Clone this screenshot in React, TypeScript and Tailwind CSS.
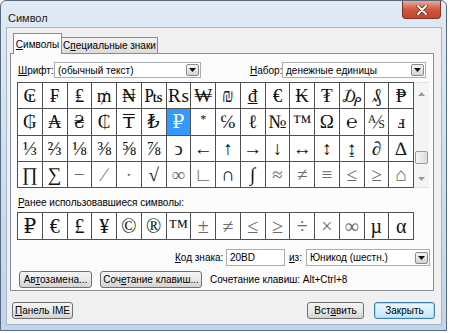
import type { ReactNode } from "react";

const rows = [
  ["₢", "₣", "₤", "₥", "₦", "₧", "₨", "₩", "₪", "₫", "€", "₭", "₮", "₯", "₰", "₱"],
  ["₲", "₳", "₴", "₵", "₸", "₺", "₽", "*", "℅", "ℓ", "№", "™", "Ω", "℮", "⅍", "ⅎ"],
  ["⅓", "⅔", "⅛", "⅜", "⅝", "⅞", "ↄ", "←", "↑", "→", "↓", "↔", "↕", "↨", "∂", "∆"],
  ["∏", "∑", "−", "∕", "∙", "√", "∞", "∟", "∩", "∫", "≈", "≠", "≡", "≤", "≥", "⌂"],
];

const greyGlyphs = ["−", "∕", "∙", "∞", "∟", "≈", "≠", "≡", "≤", "≥", "⌂", "±", "÷", "×"];

const recent = ["₽", "€", "£", "¥", "©", "®", "™", "±", "≠", "≤", "≥", "÷", "×", "∞", "µ", "α"];

function Arrow() {
  return (
    <span className="mr-px flex h-[12px] w-[13px] items-center justify-center rounded-[2px] border border-[#8a8a8a] bg-gradient-to-b from-[#f6f6f6] to-[#d4d4d4]">
      <svg width="7" height="4" viewBox="0 0 7 4">
        <path d="M0 0h7L3.5 4z" fill="#111" />
      </svg>
    </span>
  );
}

function Select({ className, text }: { className: string; text: string }) {
  return (
    <div className={`flex h-[16px] items-center border border-[#abadb3] bg-white ${className}`}>
      <span className="flex-1 truncate pl-[3px]">{text}</span>
      <Arrow />
    </div>
  );
}

function Btn({ children, className }: { children: ReactNode; className: string }) {
  return (
    <div
      className={`flex h-[17px] items-center justify-center rounded-[3px] border border-[#707070] bg-gradient-to-b from-[#f4f4f4] via-[#e9e9e9] to-[#d2d2d2] ${className}`}
    >
      {children}
    </div>
  );
}

function Cell({ ch, selected, big }: { ch: string; selected?: boolean; big?: boolean }) {
  const grey = greyGlyphs.includes(ch);
  const star = ch === "*";
  return (
    <div
      className={`flex justify-center border-r border-b border-[#505050] leading-none ${
        star ? "items-start pt-[4px] text-[12px]" : big ? "items-center text-[20px]" : "items-center text-[19px]"
      } ${selected ? "bg-[#3399ff] text-white" : grey ? "text-[#6a6a6a]" : "text-[#111]"}`}
    >
      {ch}
    </div>
  );
}

export default function App() {
  return (
    <div className="h-[333px] w-[450px] bg-white font-['Liberation_Sans',Arial,sans-serif] text-[10px] text-black">
      <div className="flex h-[331px] w-[447px] flex-col rounded-t-[6px] border border-[#5a6b7e] bg-gradient-to-b from-[#dfeaf5] via-[#cddff0] to-[#c0d5eb]">
        {/* title bar */}
        <div className="flex h-[26px] items-start">
          <span className="pt-[9px] pl-[7px] text-[11px] text-[#1a1a1a]">Символ</span>
          <div className="mr-[5px] ml-auto flex h-[18px] w-[39px] items-center justify-center rounded-b-[4px] border border-t-0 border-[#7a3428] bg-gradient-to-b from-[#e9a99b] via-[#d0583c] to-[#c9442a]">
            <svg width="12" height="10" viewBox="0 0 12 10">
              <path d="M2 1l8 8M10 1L2 9" stroke="#5b2318" strokeWidth="3.4" strokeLinecap="round" />
              <path d="M2 1l8 8M10 1L2 9" stroke="#fff" strokeWidth="2" strokeLinecap="round" />
            </svg>
          </div>
        </div>

        {/* client area */}
        <div className="ml-[5px] flex h-[298px] w-[436px] flex-col border border-[#a4b6cc] bg-[#f0f0f0]">
          {/* tabs */}
          <div className="flex h-[25px] items-end pl-[6px]">
            <div className="relative z-10 -mb-px flex h-[21px] w-[49px] items-center justify-center border border-b-0 border-[#898c95] bg-[#fcfcfc]">
              <span>
                <u>С</u>имволы
              </span>
            </div>
            <div className="flex h-[16px] w-[96px] items-center justify-center border border-b-0 border-l-0 border-[#898c95] bg-gradient-to-b from-[#f3f3f3] to-[#dcdcdc]">
              <span>
                С<u>п</u>ециальные знаки
              </span>
            </div>
          </div>

          {/* tab page */}
          <div className="ml-[3px] flex h-[238px] w-[424px] flex-col border border-[#898c95] bg-[#fbfbfb] pl-[6px]">
            <div className="mt-[8px] flex h-[16px] items-center">
              <span className="w-[37px] pl-px">
                <u>Ш</u>рифт:
              </span>
              <Select className="w-[147px]" text="(обычный текст)" />
              <span className="ml-[49px] w-[32px]">
                <u>Н</u>абор:
              </span>
              <Select className="w-[144px]" text="денежные единицы" />
            </div>

            {/* symbol grid */}
            <div className="mt-[4px] flex">
              <div className="grid h-[106px] w-[397px] grid-cols-16 grid-rows-4 border-t border-l border-[#505050] bg-white font-['Liberation_Serif','DejaVu_Serif',serif]">
                {rows.map((r, i) =>
                  r.map((ch, j) => <Cell key={`${i}-${j}`} ch={ch} selected={i === 1 && j === 6} />)
                )}
              </div>
              <div className="flex h-[106px] w-[15px] flex-col items-center border-t border-b border-[#e2e2e2] bg-[#f4f4f4]">
                <svg className="mt-[9px]" width="7" height="4" viewBox="0 0 7 4">
                  <path d="M0 4h7L3.5 0z" fill="#9a9a9a" />
                </svg>
                <div className="mt-[55px] h-[13px] w-[13px] rounded-[2px] border border-[#9a9a9a] bg-gradient-to-r from-[#f6f6f6] to-[#dcdcdc]" />
                <svg className="mt-auto mb-[6px]" width="7" height="4" viewBox="0 0 7 4">
                  <path d="M0 0h7L3.5 4z" fill="#9a9a9a" />
                </svg>
              </div>
            </div>

            <div className="mt-[10px] pl-px leading-none">
              <u>Р</u>анее использовавшиеся символы:
            </div>

            <div className="mt-[4px] grid h-[28px] w-[397px] grid-cols-16 border-t border-l border-[#505050] bg-white font-['Liberation_Serif','DejaVu_Serif',serif]">
              {recent.map((ch, i) => (
                <Cell key={i} ch={ch} big />
              ))}
            </div>

            <div className="mt-[9px] flex h-[17px] items-center">
              <span className="ml-[158px] w-[51px]">
                <u>К</u>од знака:
              </span>
              <div className="flex h-[17px] w-[59px] items-center border border-[#abadb3] bg-white pl-[3px]">20BD</div>
              <span className="ml-[4px] w-[17px]">
                <u>и</u>з:
              </span>
              <Select className="h-[17px] w-[124px]" text="Юникод (шестн.)" />
            </div>

            <div className="mt-[5px] flex h-[17px] items-center">
              <Btn className="ml-[2px] w-[73px]">
                <span>
                  Ав<u>т</u>озамена...
                </span>
              </Btn>
              <Btn className="ml-[8px] w-[102px]">
                <span>
                  Соч<u>е</u>тание клавиш...
                </span>
              </Btn>
              <span className="ml-[8px]">Сочетание клавиш: Alt+Ctrl+8</span>
            </div>
          </div>

          {/* bottom buttons */}
          <div className="mt-[11px] flex items-center pl-[5px]">
            <Btn className="w-[61px]">
              <span>
                <u>П</u>анель IME
              </span>
            </Btn>
            <Btn className="ml-auto w-[57px]">
              <span>
                Вст<u>а</u>вить
              </span>
            </Btn>
            <div className="mr-[6px] ml-[10px] flex h-[17px] w-[61px] items-center justify-center rounded-[3px] border border-[#3c7fb1] bg-gradient-to-b from-[#eaf6fd] via-[#d9f0fc] to-[#bde5fc] shadow-[inset_0_0_0_1px_#a8dcf9]">
              Закрыть
            </div>
          </div>
        </div>
      </div>
    </div>
  );
}
